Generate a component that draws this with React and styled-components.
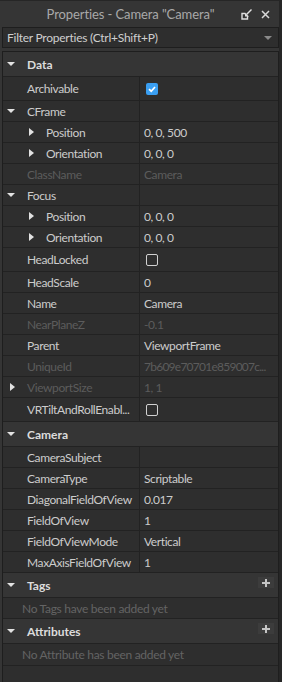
import styled, { createGlobalStyle } from "styled-components";

const GlobalStyle = createGlobalStyle`
  html, body {
    margin: 0;
    padding: 0;
    background: #353535;
  }
  body {
    font-family: Lato, "Liberation Sans", sans-serif;
    -webkit-font-smoothing: antialiased;
  }
`;

const sections = [
  {
    title: "Data",
    rows: [
      { label: "Archivable", check: true },
      { label: "CFrame", caret: "down" },
      { label: "Position", value: "0, 0, 500", depth: 1, caret: "right" },
      { label: "Orientation", value: "0, 0, 0", depth: 1, caret: "right" },
      { label: "ClassName", value: "Camera", disabled: true },
      { label: "Focus", caret: "down" },
      { label: "Position", value: "0, 0, 0", depth: 1, caret: "right" },
      { label: "Orientation", value: "0, 0, 0", depth: 1, caret: "right" },
      { label: "HeadLocked", check: false },
      { label: "HeadScale", value: "0" },
      { label: "Name", value: "Camera" },
      { label: "NearPlaneZ", value: "-0.1", disabled: true },
      { label: "Parent", value: "ViewportFrame" },
      { label: "UniqueId", value: "7b609e70701e859007c...", disabled: true, tight: true },
      { label: "ViewportSize", value: "1, 1", disabled: true, caret: "right" },
      { label: "VRTiltAndRollEnabl...", check: false },
    ],
  },
  {
    title: "Camera",
    rows: [
      { label: "CameraSubject" },
      { label: "CameraType", value: "Scriptable" },
      { label: "DiagonalFieldOfView", value: "0.017" },
      { label: "FieldOfView", value: "1" },
      { label: "FieldOfViewMode", value: "Vertical" },
      { label: "MaxAxisFieldOfView", value: "1" },
    ],
  },
];

function UndockIcon() {
  return (
    <svg width="11" height="11" viewBox="0 0 11 11">
      <path d="M4 4.5 H1 V10 H6.5 V7" fill="none" stroke="#e0e0e0" strokeWidth="1.4" />
      <path d="M10.5 0.5 L5.5 5.5" stroke="#e0e0e0" strokeWidth="1.4" />
      <path d="M4 3.5 V7.5 H8 Z" fill="#e0e0e0" />
    </svg>
  );
}

function CloseIcon() {
  return (
    <svg width="9" height="9" viewBox="0 0 9 9">
      <path d="M1 1 L8 8 M8 1 L1 8" stroke="#d8d8d8" strokeWidth="1.5" />
    </svg>
  );
}

function PlusIcon() {
  return (
    <svg width="8" height="8" viewBox="0 0 8 8">
      <path d="M4 0 V8 M0 4 H8" stroke="#c4c4c4" strokeWidth="2" />
    </svg>
  );
}

function CheckBox({ checked }) {
  return (
    <Box $checked={checked}>
      {checked && (
        <svg width="10" height="10" viewBox="0 0 10 10">
          <path d="M2 5.2 L4.2 7.2 L8 3" fill="none" stroke="#fff" strokeWidth="1.7" />
        </svg>
      )}
    </Box>
  );
}

function PropRow({ row }) {
  const depth = row.depth || 0;
  return (
    <Row $tall={row.check !== undefined}>
      <LabelCell $depth={depth} $disabled={row.disabled}>
        <CaretBox>{row.caret && <Caret $dir={row.caret} />}</CaretBox>
        {row.label}
      </LabelCell>
      <ValueCell $disabled={row.disabled} $tight={row.tight}>
        {row.check !== undefined ? <CheckBox checked={row.check} /> : row.value}
      </ValueCell>
    </Row>
  );
}

function Section({ title, children, addable }) {
  return (
    <>
      <Header>
        <CaretBox>
          <Caret $dir="down" />
        </CaretBox>
        <span>{title}</span>
        {addable && (
          <AddButton>
            <PlusIcon />
          </AddButton>
        )}
      </Header>
      {children}
    </>
  );
}

export default function App() {
  return (
    <Window>
      <GlobalStyle />
      <TitleBar>
        <Title>Properties - Camera "Camera"</Title>
        <TitleIcons>
          <UndockIcon />
          <CloseIcon />
        </TitleIcons>
      </TitleBar>
      <Filter>
        <span>Filter Properties (Ctrl+Shift+P)</span>
        <DropArrow />
      </Filter>
      <Panel>
        {sections.map((s) => (
          <Section key={s.title} title={s.title}>
            {s.rows.map((r, i) => (
              <PropRow key={i} row={r} />
            ))}
          </Section>
        ))}
        <Section title="Tags" addable>
          <Empty>No Tags have been added yet</Empty>
        </Section>
        <Section title="Attributes" addable>
          <Empty $tall>No Attribute has been added yet</Empty>
        </Section>
      </Panel>
    </Window>
  );
}

const Window = styled.div`
  width: 279px;
  height: 682px;
  border-right: 3px solid #262626;
  display: flex;
  flex-direction: column;
  background: #353535;
  overflow: hidden;
`;

const TitleBar = styled.div`
  height: 26px;
  border-top: 1px solid #262626;
  display: flex;
  align-items: center;
`;

const Title = styled.div`
  flex: 1;
  text-align: center;
  padding-left: 28px;
  font-size: 13px;
  letter-spacing: -0.1px;
  color: #a9a9a9;
`;

const TitleIcons = styled.div`
  display: flex;
  align-items: center;
  gap: 9px;
  padding: 0 9px 0 8px;
  svg {
    display: block;
  }
`;

const Filter = styled.div`
  height: 19px;
  margin-left: 2px;
  border: 1px solid #1e1e1e;
  background: #2e2e2e;
  display: flex;
  align-items: center;
  justify-content: space-between;
  padding: 0 6px 0 4px;
  font-size: 12px;
  letter-spacing: -0.25px;
  color: #cfcfcf;
`;

const DropArrow = styled.span`
  width: 0;
  height: 0;
  border-left: 4px solid transparent;
  border-right: 4px solid transparent;
  border-top: 4px solid #8a8a8a;
`;

const Panel = styled.div`
  flex: 1;
  margin: 3px 0 0 2px;
  border: 1px solid #1e1e1e;
  border-bottom: none;
  background: #2e2e2e;
`;

const Row = styled.div`
  display: flex;
  height: ${(p) => (p.$tall ? 23 : 20)}px;
  border-bottom: 1px solid #222222;
  font-size: 12px;
  letter-spacing: -0.4px;
`;

const LabelCell = styled.div`
  width: ${(p) => 136 - p.$depth * 19}px;
  padding-left: ${(p) => p.$depth * 19}px;
  border-right: 1px solid #222222;
  display: flex;
  align-items: center;
  white-space: nowrap;
  overflow: hidden;
  color: ${(p) => (p.$disabled ? "#5c5c5c" : "#cccccc")};
`;

const CaretBox = styled.span`
  width: 24px;
  flex: none;
  display: flex;
  align-items: center;
`;

const Caret = styled.span`
  width: 0;
  height: 0;
  ${(p) =>
    p.$dir === "down"
      ? `
    margin-left: 4px;
    border-left: 4px solid transparent;
    border-right: 4px solid transparent;
    border-top: 4px solid #e2e2e2;
  `
      : `
    margin-left: 7px;
    border-top: 4px solid transparent;
    border-bottom: 4px solid transparent;
    border-left: 5px solid #e2e2e2;
  `}
`;

const ValueCell = styled.div`
  flex: 1;
  min-width: 0;
  display: flex;
  align-items: center;
  padding-left: 4px;
  white-space: nowrap;
  overflow: hidden;
  letter-spacing: ${(p) => (p.$tight ? "-0.75px" : "-0.4px")};
  color: ${(p) => (p.$disabled ? "#5c5c5c" : "#cccccc")};
`;

const Box = styled.span`
  box-sizing: border-box;
  width: 12px;
  height: 12px;
  margin-left: 2px;
  border-radius: 2px;
  display: flex;
  align-items: center;
  justify-content: center;
  background: ${(p) => (p.$checked ? "#3a9ff2" : "transparent")};
  border: ${(p) => (p.$checked ? "none" : "1px solid #d0d0d0")};
`;

const Header = styled.div`
  position: relative;
  height: 24px;
  border-bottom: 1px solid #222222;
  background: #353535;
  display: flex;
  align-items: center;
  font-size: 12px;
  font-weight: 700;
  color: #dcdcdc;
`;

const AddButton = styled.span`
  position: absolute;
  right: 4px;
  top: 4px;
  width: 16px;
  height: 11px;
  background: #3c3c3c;
  display: flex;
  align-items: center;
  justify-content: center;
  svg {
    display: block;
  }
`;

const Empty = styled.div`
  height: ${(p) => (p.$tall ? 21 : 20)}px;
  border-bottom: 1px solid #222222;
  display: flex;
  align-items: center;
  padding-left: 19px;
  font-size: 12px;
  letter-spacing: -0.3px;
  color: #646464;
`;
